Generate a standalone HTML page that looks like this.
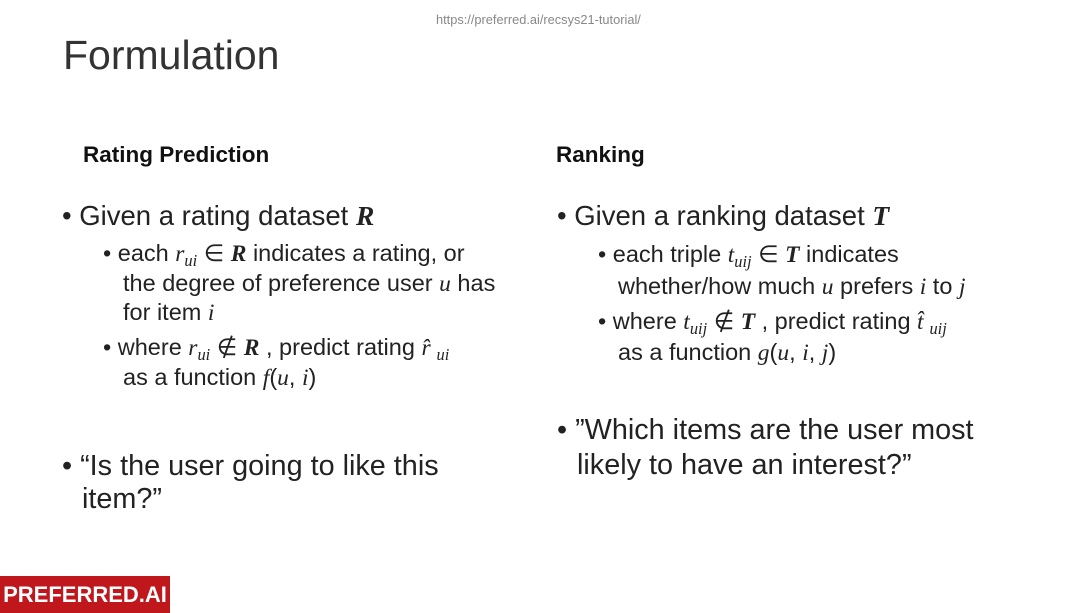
<!DOCTYPE html>
<html><head><meta charset="utf-8"><style>
body{margin:0;width:1080px;height:613px;background:#fff;position:relative;overflow:hidden;font-family:"Liberation Sans",sans-serif;color:#222}
.l{position:absolute;white-space:nowrap;line-height:30px;height:30px}
.m{font-size:27.5px}
.q{font-size:28.8px}
.s{font-size:23.5px}
.h{font-size:22.5px;font-weight:bold;color:#111}
.mi{font-family:"Liberation Serif",serif;font-style:italic}
.mb{font-family:"Liberation Serif",serif;font-style:italic;font-weight:bold}
sub{font-size:0.7em;vertical-align:-0.3em;line-height:0}
</style></head><body>
<div class="l" style="left:436px;top:5px;font-size:12.8px;color:#888">https://preferred.ai/recsys21-tutorial/</div>
<div class="l" style="left:63px;top:35px;font-size:41px;color:#333;line-height:40px;height:40px">Formulation</div>

<div class="l h" style="left:83px;top:140px">Rating Prediction</div>
<div class="l h" style="left:556px;top:140px">Ranking</div>

<div class="l m" style="left:62px;top:201px">• Given a rating dataset <span class="mb">R</span></div>
<div class="l s" style="left:103px;top:238px">• each <span class="mi">r<sub>ui</sub></span> ∈ <span class="mb">R</span> indicates a rating, or</div>
<div class="l s" style="left:123px;top:268px">the degree of preference user <span class="mi">u</span> has</div>
<div class="l s" style="left:123px;top:297px">for item <span class="mi">i</span></div>
<div class="l s" style="left:103px;top:332px">• where <span class="mi">r<sub>ui</sub></span> ∉ <span class="mb">R</span> , predict rating <span class="mi">r̂ <sub>ui</sub></span></div>
<div class="l s" style="left:123px;top:362px">as a function <span class="mi">f</span>(<span class="mi">u</span>, <span class="mi">i</span>)</div>
<div class="l q" style="left:62px;top:451px">• “Is the user going to like this</div>
<div class="l q" style="left:82px;top:484px">item?”</div>

<div class="l m" style="left:557px;top:201px">• Given a ranking dataset <span class="mb">T</span></div>
<div class="l s" style="left:598px;top:239px">• each triple <span class="mi">t<sub>uij</sub></span> ∈ <span class="mb">T</span> indicates</div>
<div class="l s" style="left:618px;top:271px">whether/how much <span class="mi">u</span> prefers <span class="mi">i</span> to <span class="mi">j</span></div>
<div class="l s" style="left:598px;top:306px">• where <span class="mi">t<sub>uij</sub></span> ∉ <span class="mb">T</span> , predict rating <span class="mi">t̂ <sub>uij</sub></span></div>
<div class="l s" style="left:618px;top:337px">as a function <span class="mi">g</span>(<span class="mi">u</span>, <span class="mi">i</span>, <span class="mi">j</span>)</div>
<div class="l q" style="left:557px;top:415px">• ”Which items are the user most</div>
<div class="l q" style="left:577px;top:450px">likely to have an interest?”</div>

<div style="position:absolute;left:0;top:576px;width:170px;height:37px;background:#c0171d;color:#fff;font-weight:bold;font-size:22px;line-height:37px;text-align:center">PREFERRED.AI</div>
</body></html>
